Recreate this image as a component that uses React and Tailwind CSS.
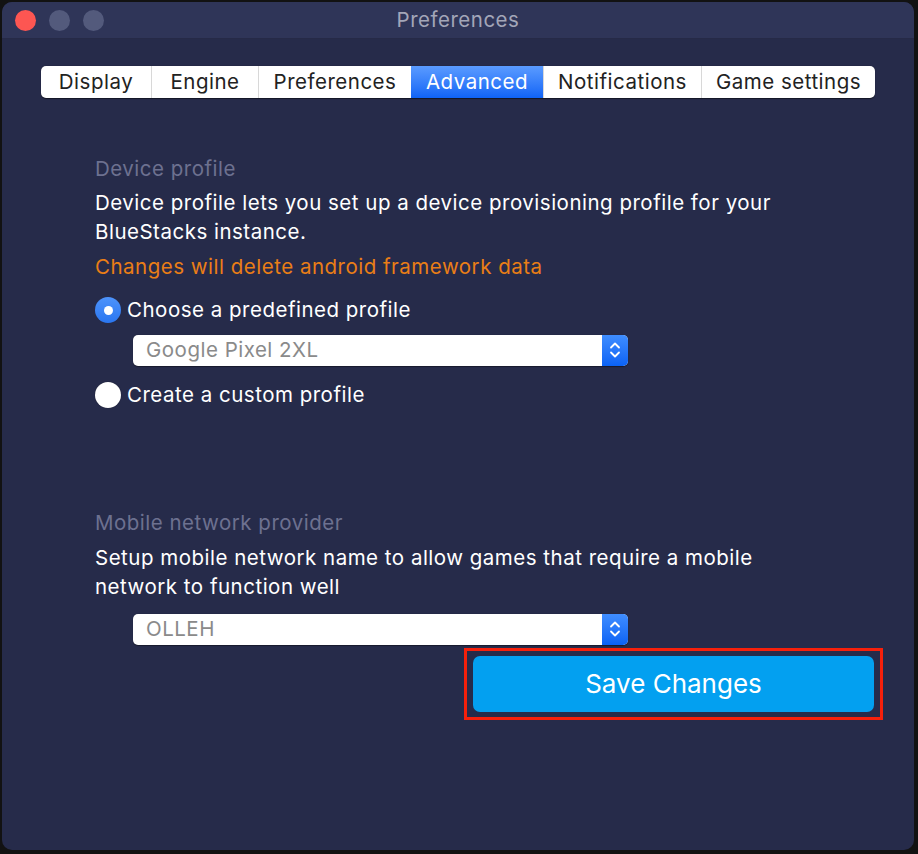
import React from 'react';

const tabs = [
  { label: 'Display', w: 110 },
  { label: 'Engine', w: 107 },
  { label: 'Preferences', w: 153 },
  { label: 'Advanced', w: 132, active: true },
  { label: 'Notifications', w: 158 },
  { label: 'Game settings', w: 174 },
];

const Select = ({ value }) => (
  <div className="flex h-[31px] w-[495px] rounded-[5px] bg-white shadow-[0_0.5px_1px_rgba(0,0,0,0.4)]">
    <div className="flex flex-1 items-center pl-[13px] text-[#8a8a8a]">{value}</div>
    <div className="flex w-[26px] items-center justify-center rounded-r-[5px] bg-gradient-to-b from-[#3f8dff] to-[#0a62f5]">
      <svg width="12" height="20" viewBox="0 0 12 20" fill="none" stroke="white" strokeWidth="1.8" strokeLinecap="round" strokeLinejoin="round">
        <path d="M2 7.5 6 3.5 10 7.5" />
        <path d="M2 12.5 6 16.5 10 12.5" />
      </svg>
    </div>
  </div>
);

const Radio = ({ checked, label }) => (
  <div className="flex items-center gap-[6px]">
    {checked ? (
      <div className="flex h-[26px] w-[26px] items-center justify-center rounded-full bg-gradient-to-b from-[#4d93fb] to-[#2a76f0]">
        <div className="h-[9px] w-[9px] rounded-full bg-white" />
      </div>
    ) : (
      <div className="h-[26px] w-[26px] rounded-full bg-white shadow-[0_0_1px_rgba(0,0,0,0.5)]" />
    )}
    <span className="text-white">{label}</span>
  </div>
);

export default function App() {
  return (
    <div className="h-[854px] w-[918px] bg-[#121212] p-[2px] pr-[4px] pb-[4px] font-['Inter',sans-serif] text-[20.5px] tracking-[0.5px]">
      <div className="flex h-full flex-col overflow-hidden rounded-[10px] bg-[#262b4a]">
        {/* title bar */}
        <div className="relative flex h-[37px] items-center bg-[#2f3558] border-b border-[#262a47]">
          <div className="flex items-center gap-[13px] pl-[13px]">
            <div className="h-[21px] w-[21px] rounded-full bg-[#fd5652]" />
            <div className="h-[21px] w-[21px] rounded-full bg-[#535a7c]" />
            <div className="h-[21px] w-[21px] rounded-full bg-[#535a7c]" />
          </div>
          <div className="absolute inset-0 flex items-center justify-center text-[#a3a6b8]">
            Preferences
          </div>
        </div>

        {/* tabs */}
        <div className="mt-[27px] flex pl-[39px]">
          <div className="flex h-[32px] overflow-hidden rounded-[5px] bg-white shadow-[0_0.5px_1px_rgba(0,0,0,0.5)]">
            {tabs.map((t, i) => (
              <div
                key={t.label}
                style={{ width: t.w }}
                className={
                  t.active
                    ? 'flex items-center justify-center bg-gradient-to-b from-[#5a9bff] to-[#0e63f6] text-white'
                    : 'flex items-center justify-center text-[#222] ' + (i > 0 ? 'border-l border-[#d8d8d8]' : '')
                }
              >
                {t.label}
              </div>
            ))}
          </div>
        </div>

        {/* content */}
        <div className="flex flex-col pl-[93px] pt-[56px]">
          <div className="leading-[29px] text-[#6d7190]">Device profile</div>
          <div className="mt-[5px] w-[700px] leading-[29px] text-white">
            Device profile lets you set up a device provisioning profile for your BlueStacks instance.
          </div>
          <div className="mt-[6px] leading-[29px] text-[#ea7e16]">Changes will delete android framework data</div>
          <div className="mt-[14px]">
            <Radio checked label="Choose a predefined profile" />
          </div>
          <div className="mt-[9px] pl-[38px]">
            <Select value="Google Pixel 2XL" />
          </div>
          <div className="mt-[14px]">
            <Radio label="Create a custom profile" />
          </div>

          <div className="mt-[97px] leading-[29px] text-[#6d7190]">Mobile network provider</div>
          <div className="mt-[6px] w-[700px] leading-[29px] text-white">
            Setup mobile network name to allow games that require a mobile network to function well
          </div>
          <div className="mt-[13px] pl-[38px]">
            <Select value="OLLEH" />
          </div>
        </div>

        <div className="flex pl-[462px] pt-[3px]">
          <div className="border-[3px] border-[#f6200b] px-[6px] py-[5px]">
            <button className="flex h-[56px] w-[401px] items-center justify-center rounded-[7px] bg-[#03a0f0] text-[26px] tracking-normal text-white">
              Save Changes
            </button>
          </div>
        </div>
      </div>
    </div>
  );
}
